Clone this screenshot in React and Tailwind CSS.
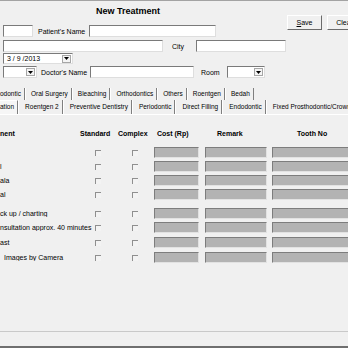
import React from "react";

const field = "h-full bg-white border border-t-[#7a7a7a] border-l-[#7a7a7a] border-r-[#dedede] border-b-[#dedede]";
const grayBox = "h-full bg-[#b3b3b3] border border-t-[#7d7d7d] border-l-[#7d7d7d] border-r-[#e2e2e2] border-b-[#e2e2e2]";

const Arrow = () => (
    <div className="w-[9px] h-[8px] bg-[#f4f4f4] border border-[#a6a6a6] flex items-center justify-center">
        <svg width="5" height="3" viewBox="0 0 5 3">
            <path d="M0 0h5L2.5 3z" fill="#000" />
        </svg>
    </div>
);

const Check = () => (
    <div className="w-[6px] h-[6px] shrink-0 border-t border-l border-[#8f8f8f] bg-[#f3f3f3]"></div>
);

const tabsTop = ["Oral Surgery", "Bleaching", "Orthodontics", "Others", "Roentgen", "Bedah"];
const tabsBottom = ["Roentgen 2", "Preventive Dentistry", "Periodontic", "Direct Filling", "Endodontic", "Fixed Prosthodontic/Crown"];

// potongan label yang kelihatan di kolom kiri
const rows = [
    { label: "", mt: "mt-[9px]" },
    { label: "l", mt: "mt-[3px]" },
    { label: "ala", mt: "mt-[3px]" },
    { label: "al", mt: "mt-[3px]" },
    { label: "ck up / charting", mt: "mt-[8px]" },
    { label: "nsultation approx. 40 minutes", mt: "mt-[3px]" },
    { label: "ast", mt: "mt-[4px]" },
    { label: "Images by Camera", mt: "mt-[4px]", pad: true },
];

const App = () => {
    return (
        <div className="w-[348px] h-[348px] overflow-hidden whitespace-nowrap bg-[#f0f0f0] flex flex-col font-['Liberation_Sans',Arial,sans-serif] text-[7px] leading-none text-black border-t border-[#a3a3a3]">
            {/* Bagian atas: form pasien */}
            <div className="flex shrink-0">
                <div className="w-[287px] shrink-0">
                    <div className="h-[24px] pl-[96px] pt-[6px] font-bold text-[9px]">New Treatment</div>

                    <div className="flex items-center h-[12px]">
                        <div className={`${field} w-[30px] ml-[3px]`}></div>
                        <div className="w-[56px] shrink-0 pl-[5px]">Patient&apos;s Name</div>
                        <div className={`${field} w-[127px]`}></div>
                    </div>

                    <div className="flex items-center h-[12px] mt-[3px]">
                        <div className={`${field} w-[160px] ml-[3px]`}></div>
                        <div className="w-[33px] shrink-0 pl-[9px]">City</div>
                        <div className={`${field} w-[90px]`}></div>
                    </div>

                    <div className="flex items-center h-[11px] mt-[1px]">
                        <div className={`${field} w-[70px] ml-[3px] flex items-center justify-between pl-[3px] pr-[1px]`}>
                            <span>3 / 9 /2013</span>
                            <Arrow />
                        </div>
                    </div>

                    <div className="flex items-center h-[12px] mt-[2px]">
                        <div className={`${field} w-[34px] ml-[3px] flex items-center justify-end pr-[1px]`}>
                            <Arrow />
                        </div>
                        <div className="w-[53px] shrink-0 pl-[4px]">Doctor&apos;s Name</div>
                        <div className={`${field} w-[104px]`}></div>
                        <div className="w-[33px] shrink-0 pl-[7px]">Room</div>
                        <div className={`${field} w-[38px] flex items-center justify-end pr-[1px]`}>
                            <Arrow />
                        </div>
                    </div>
                </div>

                <div className="flex gap-[5px] pt-[14px]">
                    <button className="w-[35px] h-[15px] shrink-0 bg-[#f0f0f0] border border-t-white border-l-white border-r-[#6b6b6b] border-b-[#6b6b6b] text-[7px]">
                        <span className="underline">S</span>ave
                    </button>
                    <button className="w-[35px] h-[15px] shrink-0 bg-[#f0f0f0] border border-t-white border-l-white border-r-[#6b6b6b] border-b-[#6b6b6b] text-[7px]">
                        Clear
                    </button>
                </div>
            </div>

            {/* Tab */}
            <div className="mt-[10px] text-[6.5px] shrink-0">
                <div className="flex h-[12px]">
                    <div className="flex items-center h-full pr-[3px] border-r border-[#7f7f7f]">odontic</div>
                    {tabsTop.map((t) => (
                        <div key={t} className="flex items-center h-full pl-[5px] pr-[3px] border-l border-l-white border-r border-r-[#7f7f7f]">
                            {t}
                        </div>
                    ))}
                </div>
                <div className="flex h-[14px]">
                    <div className="flex items-center h-full pr-[3px] bg-[#f6f6f6] border-t border-t-white border-r border-r-[#7f7f7f]">ation</div>
                    {tabsBottom.map((t) => (
                        <div key={t} className="flex items-center h-full pl-[6px] pr-[3px] border-l border-l-white border-r border-r-[#7f7f7f]">
                            {t}
                        </div>
                    ))}
                </div>
            </div>

            {/* Isi tab */}
            <div className="flex-1 border-t border-white">
                <div className="flex items-center h-[10px] mt-[13px] font-bold">
                    <div className="w-[80px]">nent</div>
                    <div className="w-[38px]">Standard</div>
                    <div className="w-[39px]">Complex</div>
                    <div className="w-[60px]">Cost (Rp)</div>
                    <div className="w-[80px]">Remark</div>
                    <div>Tooth No</div>
                </div>

                {rows.map((r, i) => (
                    <div key={i} className={`flex items-center h-[11px] ${r.mt}`}>
                        <div className={`w-[95px] shrink-0 overflow-hidden ${r.pad ? "pl-[4px]" : ""}`}>{r.label}</div>
                        <Check />
                        <div className="ml-[31px]">
                            <Check />
                        </div>
                        <div className={`${grayBox} w-[45px] ml-[16px] shrink-0`}></div>
                        <div className={`${grayBox} w-[62px] ml-[6px] shrink-0`}></div>
                        <div className={`${grayBox} w-[90px] ml-[5px] shrink-0`}></div>
                    </div>
                ))}
            </div>

            {/* Status bar */}
            <div className="h-[17px] shrink-0 border-t border-[#c9c9c9] border-b-2 border-b-[#6f6f6f]"></div>
        </div>
    );
};

export default App;
